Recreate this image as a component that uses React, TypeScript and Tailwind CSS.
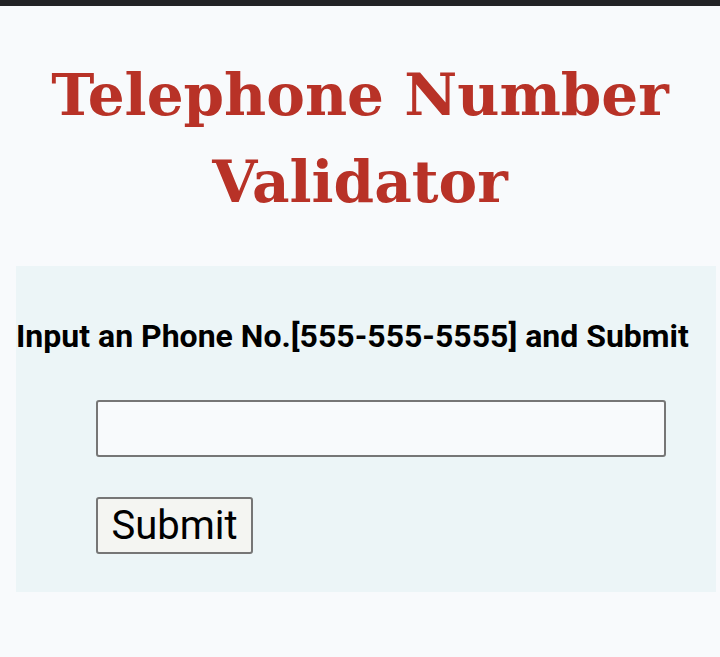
export default function App() {
  return (
    <div className="min-h-[657px] bg-[#f8fafc]">
      <div className="h-[6px] bg-[#222325]" />
      <h1 className="mt-[46px] px-4 text-center font-['DejaVu_Serif',serif] text-[58px] font-bold leading-[87px] text-[#b83227]">
        Telephone Number Validator
      </h1>
      <div className="ml-4 mt-[40px] w-[700px] bg-[#ecf5f7] pt-[51px] pb-[38px]">
        <h2 className="font-['Roboto',sans-serif] text-[32px] font-bold leading-[38px] text-black">
          Input an Phone No.[555-555-5555] and Submit
        </h2>
        <div className="mt-[45px] flex flex-col items-start gap-[40px] pl-20">
          <input
            type="text"
            className="h-[57px] w-[570px] rounded-[3px] border-2 border-[#767676] bg-[#f8fafc]"
          />
          <button className="h-[57px] w-[157px] rounded-[3px] border-2 border-[#767676] bg-[#f4f5f2] font-['Roboto',sans-serif] text-[40px] leading-none text-black">
            Submit
          </button>
        </div>
      </div>
    </div>
  )
}
